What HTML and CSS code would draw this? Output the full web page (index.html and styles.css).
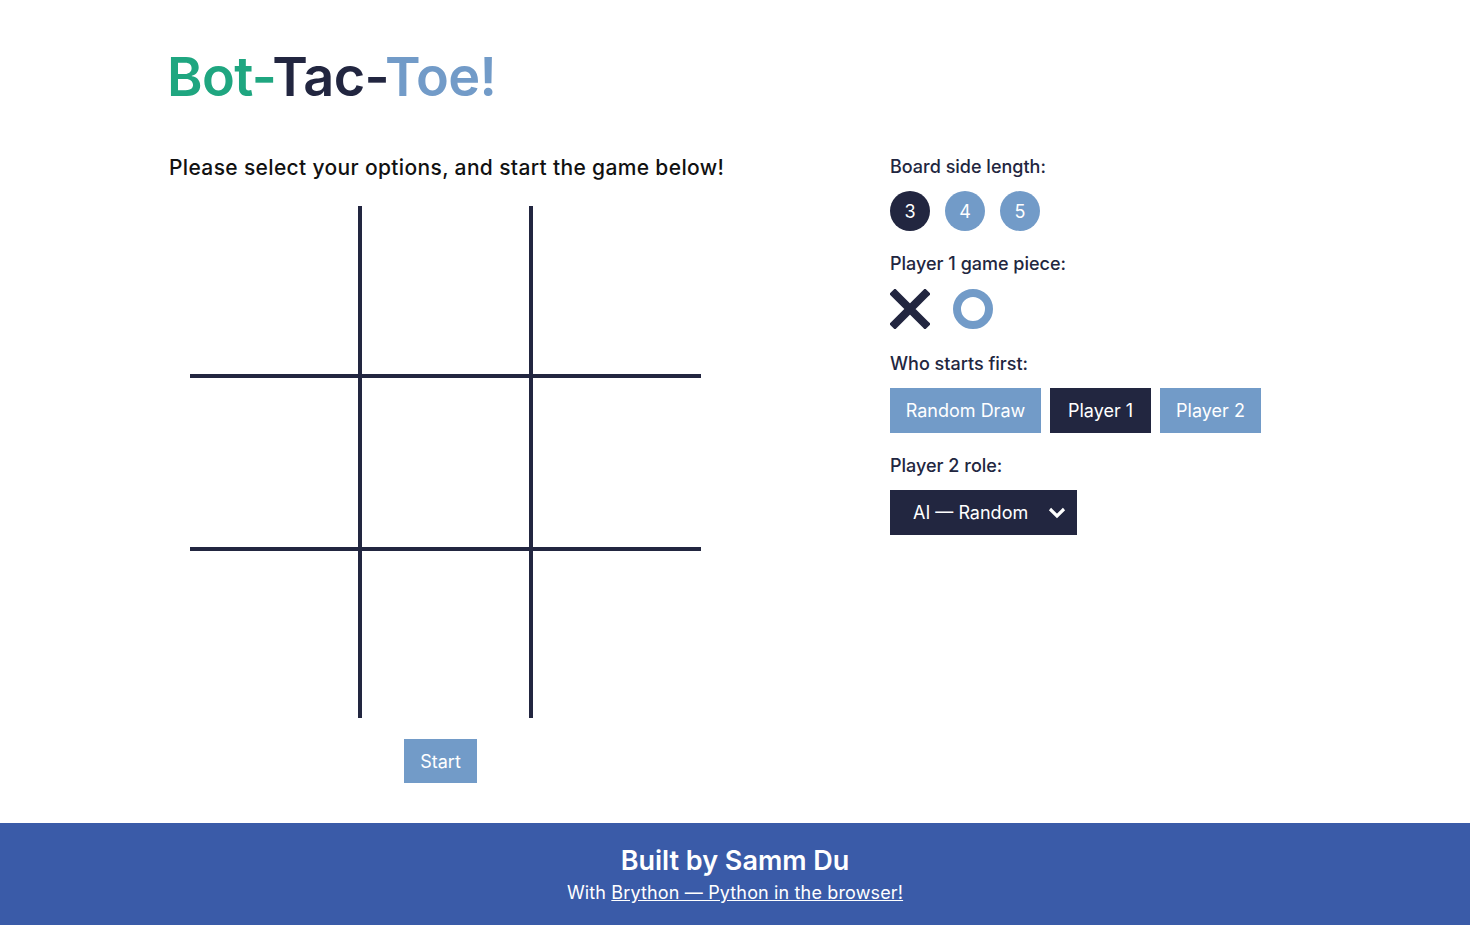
FILE: index.html
```html
<!DOCTYPE html>
<html lang="en">
<head>
<meta charset="utf-8">
<title>Bot-Tac-Toe!</title>
<link rel="stylesheet" href="styles.css">
</head>
<body>
<main class="page">
  <h1 class="title"><span class="t-green">Bot-</span><span class="t-navy">Tac-</span><span class="t-blue">Toe!</span></h1>
  <div class="columns">
    <section class="left">
      <p class="intro">Please select your options, and start the game below!</p>
      <div class="board">
        <div class="cell"></div><div class="cell"></div><div class="cell"></div>
        <div class="cell"></div><div class="cell"></div><div class="cell"></div>
        <div class="cell"></div><div class="cell"></div><div class="cell"></div>
      </div>
      <button class="btn start">Start</button>
    </section>
    <section class="right">
      <div class="opt">
        <div class="label">Board side length:</div>
        <div class="row circles">
          <span class="circ active">3</span>
          <span class="circ">4</span>
          <span class="circ">5</span>
        </div>
      </div>
      <div class="opt">
        <div class="label">Player 1 game piece:</div>
        <div class="row pieces">
          <svg class="piece" width="40" height="40" viewBox="0 0 40 40"><path d="M5 5 L35 35 M35 5 L5 35" stroke="#222640" stroke-width="8" stroke-linecap="square"/></svg>
          <svg class="piece" width="40" height="40" viewBox="0 0 40 40"><circle cx="20" cy="20" r="16" fill="none" stroke="#729bc8" stroke-width="8"/></svg>
        </div>
      </div>
      <div class="opt">
        <div class="label">Who starts first:</div>
        <div class="row btns">
          <button class="btn light">Random Draw</button>
          <button class="btn dark">Player 1</button>
          <button class="btn light">Player 2</button>
        </div>
      </div>
      <div class="opt">
        <div class="label">Player 2 role:</div>
        <div class="select">
          <span>AI — Random</span>
          <svg width="18" height="12" viewBox="0 0 18 12"><path d="M2 2 L9 9 L16 2" fill="none" stroke="#fff" stroke-width="3.2"/></svg>
        </div>
      </div>
    </section>
  </div>
</main>
<footer class="footer">
  <div class="built">Built by Samm Du</div>
  <div class="with">With <a href="#">Brython — Python in the browser! </a></div>
</footer>
</body>
</html>
```
FILE: styles.css
```css
* { box-sizing: border-box; }
html, body { margin: 0; padding: 0; }
body {
  font-family: "Inter", "Lato", sans-serif;
  color: #222640;
  background: #fff;
  height: 925px;
  display: flex;
  flex-direction: column;
}
.page {
  flex: 1;
  padding: 44px 0 0 169px;
}
.title {
  margin: 0 0 0 -2px;
  font-size: 54px;
  font-weight: 600;
  letter-spacing: -0.6px;
  line-height: 66px;
}
.t-green { color: #1fa680; }
.t-navy { color: #222640; }
.t-blue { color: #729bc8; }
.columns {
  display: flex;
  margin-top: 42px;
}
.left {
  width: 552px;
  display: flex;
  flex-direction: column;
  align-items: flex-start;
}
.intro {
  margin: 2px 0 0;
  font-size: 21px;
  font-weight: 500;
  letter-spacing: 0.35px;
  color: #111;
  line-height: 28px;
  white-space: nowrap;
}
.board {
  margin-top: 24px;
  margin-left: 21px;
  width: 511px;
  height: 512px;
  background:
    linear-gradient(#222640, #222640) 168px 0 / 4px 100% no-repeat,
    linear-gradient(#222640, #222640) 339px 0 / 4px 100% no-repeat,
    linear-gradient(#222640, #222640) 0 168px / 100% 4px no-repeat,
    linear-gradient(#222640, #222640) 0 341px / 100% 4px no-repeat;
}
.cell { display: none; }
.btn {
  border: none;
  font-family: inherit;
  font-size: 18px;
  color: #fff;
  padding: 0 16px;
  height: 45px;
  cursor: pointer;
}
.start {
  margin-top: 21px;
  margin-left: 235px;
  background: #729bc8;
  height: 44px;
  width: 73px;
  padding: 0;
}
.right {
  margin-left: 169px;
  display: flex;
  flex-direction: column;
  padding-top: 3px;
}
.label {
  font-size: 18px;
  font-weight: 500;
  line-height: 24px;
}
.opt + .opt { margin-top: 21px; }
.row { display: flex; margin-top: 12px; }
.circles { gap: 15px; }
.circ {
  width: 40px;
  height: 40px;
  border-radius: 50%;
  background: #729bc8;
  color: #fff;
  display: flex;
  align-items: center;
  justify-content: center;
  font-size: 18px;
}
.circ.active { background: #222640; }
.pieces { gap: 23px; height: 42px; margin-top: 13px; }
.btns { gap: 9px; margin-top: 12px; }
.btns .btn { min-width: 101px; }
.btns .btn:first-child { width: 151px; padding: 0; }
.light { background: #729bc8; }
.dark { background: #222640; }
.select {
  margin-top: 12px;
  width: 187px;
  height: 45px;
  background: #222640;
  color: #fff;
  display: flex;
  align-items: center;
  justify-content: space-between;
  padding: 0 11px 0 23px;
  font-size: 18px;
}
.footer {
  height: 102px;
  background: #3a5ba8;
  color: #fff;
  text-align: center;
  padding-top: 22px;
}
.built {
  font-size: 27px;
  font-weight: 600;
  line-height: 32px;
}
.with {
  font-size: 18px;
  letter-spacing: 0.15px;
  line-height: 32px;
}
.with a { color: #fff; }
```
